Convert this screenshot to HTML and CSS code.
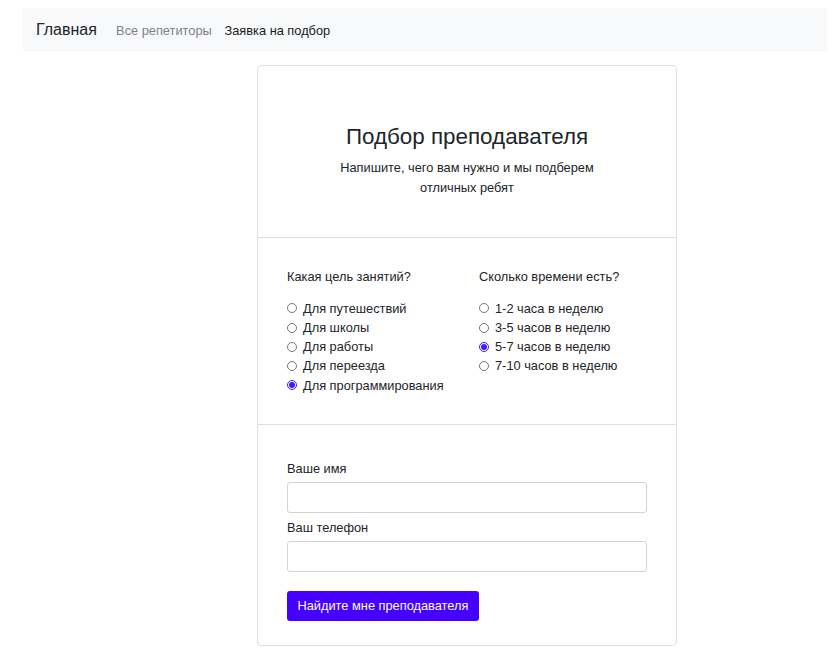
FILE: index.html
```html
<!DOCTYPE html>
<html lang="ru">
<head>
<meta charset="utf-8">
<title>Подбор преподавателя</title>
<link rel="stylesheet" href="styles.css">
</head>
<body>
<nav class="navbar">
  <a class="brand" href="#">Главная</a>
  <a class="nav-link" href="#">Все репетиторы</a>
  <a class="nav-link active" href="#">Заявка на подбор</a>
</nav>
<main class="card">
  <section class="card-head">
    <h1 class="title">Подбор преподавателя</h1>
    <p class="subtitle">Напишите, чего вам нужно и мы подберем отличных ребят</p>
  </section>
  <section class="card-options">
    <div class="group">
      <p class="group-title">Какая цель занятий?</p>
      <label class="radio"><input type="radio" name="goal"> Для путешествий</label>
      <label class="radio"><input type="radio" name="goal"> Для школы</label>
      <label class="radio"><input type="radio" name="goal"> Для работы</label>
      <label class="radio"><input type="radio" name="goal"> Для переезда</label>
      <label class="radio"><input type="radio" name="goal" checked> Для программирования</label>
    </div>
    <div class="group">
      <p class="group-title">Сколько времени есть?</p>
      <label class="radio"><input type="radio" name="time"> 1-2 часа в неделю</label>
      <label class="radio"><input type="radio" name="time"> 3-5 часов в неделю</label>
      <label class="radio"><input type="radio" name="time" checked> 5-7 часов в неделю</label>
      <label class="radio"><input type="radio" name="time"> 7-10 часов в неделю</label>
    </div>
  </section>
  <section class="card-form">
    <label class="field-label" for="name">Ваше имя</label>
    <input class="field" id="name" type="text">
    <label class="field-label" for="phone">Ваш телефон</label>
    <input class="field" id="phone" type="text">
    <button class="btn" type="button">Найдите мне преподавателя</button>
  </section>
</main>
</body>
</html>
```
FILE: styles.css
```css
html, body {
  overflow: hidden;
}
body {
  margin: 8px;
  font-family: "Liberation Sans", Arial, sans-serif;
  font-size: 12.8px;
  color: #212529;
  background: #fff;
}
.navbar {
  display: flex;
  align-items: center;
  height: 44px;
  margin: 0 -8px 0 15px;
  padding: 0 6.4px 0 13px;
  background: #f8f9fa;
}
.brand {
  font-size: 16px;
  color: #212529;
  text-decoration: none;
  margin-right: 12.8px;
}
.nav-link {
  font-size: 12.8px;
  color: #808182;
  text-decoration: none;
  padding: 0 6.4px;
}
.nav-link.active {
  color: #1a1a1a;
}
.card {
  width: 418px;
  margin: 13px 0 0 249px;
  border: 1px solid #dfdfdf;
  border-radius: 4px;
}
.card-head {
  text-align: center;
  padding: 58px 30px 40px;
  border-bottom: 1px solid #dfdfdf;
}
.title {
  margin: 0 0 8px;
  font-size: 22.4px;
  font-weight: 400;
  line-height: 26px;
}
.subtitle {
  margin: 0 auto;
  max-width: 270px;
  line-height: 19.5px;
}
.card-options {
  display: grid;
  grid-template-columns: 192px 1fr;
  padding: 29px 29px 29px;
  border-bottom: 1px solid #dfdfdf;
}
.group {
  display: flex;
  flex-direction: column;
}
.group-title {
  margin: 0 0 12.5px;
  line-height: 19.2px;
}
.radio {
  display: flex;
  align-items: center;
  line-height: 19.25px;
}
.radio input {
  width: 10px;
  height: 10px;
  margin: 0 6px 0 0;
  accent-color: #3a1cff;
}
.card-form {
  display: flex;
  flex-direction: column;
  align-items: flex-start;
  padding: 34px 29px 24px;
}
.field-label {
  line-height: 19px;
  margin-bottom: 4px;
}
.field {
  box-sizing: border-box;
  width: 360px;
  height: 31px;
  margin: 0 0 5px;
  border: 1px solid #ced4da;
  border-radius: 3px;
  padding: 4px 10px;
  font: inherit;
}
.btn {
  margin-top: 14px;
  height: 30px;
  padding: 0 10.5px;
  border: none;
  border-radius: 3px;
  background: #4500ff;
  color: #fff;
  font-family: inherit;
  font-size: 12.8px;
}
```
